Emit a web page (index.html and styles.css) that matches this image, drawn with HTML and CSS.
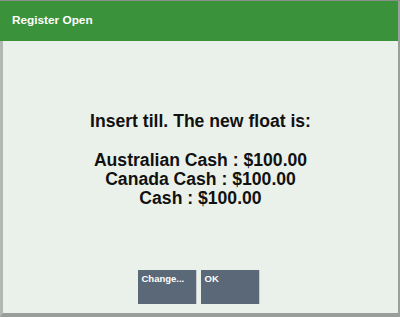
FILE: index.html
```html
<!DOCTYPE html>
<html>
<head>
<meta charset="utf-8">
<link rel="stylesheet" href="styles.css">
</head>
<body>
<div class="window">
  <div class="header">Register Open</div>
  <div class="content">
    <div class="message">
      <div class="line lead">Insert till. The new float is:</div>
      <div class="line">Australian Cash : $100.00</div>
      <div class="line">Canada Cash : $100.00</div>
      <div class="line">Cash : $100.00</div>
    </div>
    <div class="buttons">
      <button class="btn">Change...</button>
      <button class="btn">OK</button>
    </div>
  </div>
</div>
</body>
</html>
```
FILE: styles.css
```css
html, body {
  margin: 0;
  padding: 0;
  background: #eaf1ea;
}
.window {
  width: 400px;
  height: 317px;
  box-sizing: border-box;
  border-top: 1px solid #8a8f8a;
  display: flex;
  flex-direction: column;
  font-family: "Liberation Sans", Arial, sans-serif;
}
.header {
  height: 40px;
  background: #3a923b;
  color: #ffffff;
  font-weight: bold;
  font-size: 11.8px;
  display: flex;
  align-items: center;
  padding-left: 12px;
  padding-bottom: 3px;
  box-sizing: border-box;
  border-right: 2px solid #9aa09a;
}
.content {
  flex: 1;
  background: #eaf1ea;
  border-left: 3px solid #b4b8b4;
  border-right: 2px solid #9aa09a;
  border-bottom: 4px solid #9a9e9a;
  display: flex;
  flex-direction: column;
  align-items: center;
}
.message {
  margin-top: 71px;
  color: #111;
  font-weight: bold;
  font-size: 17.6px;
  text-align: center;
  line-height: 19px;
}
.lead {
  margin-bottom: 20px;
}
.buttons {
  margin-top: auto;
  margin-bottom: 9px;
  display: flex;
  gap: 4px;
  margin-left: -4px;
}
.btn {
  width: 59px;
  height: 34px;
  background: #5b6878;
  border: none;
  border-right: 1px solid #c8ccd0;
  color: #ffffff;
  font-family: "Liberation Sans", Arial, sans-serif;
  font-weight: bold;
  font-size: 9.5px;
  text-align: left;
  padding: 3px 4px;
  display: flex;
  align-items: flex-start;
}
```
